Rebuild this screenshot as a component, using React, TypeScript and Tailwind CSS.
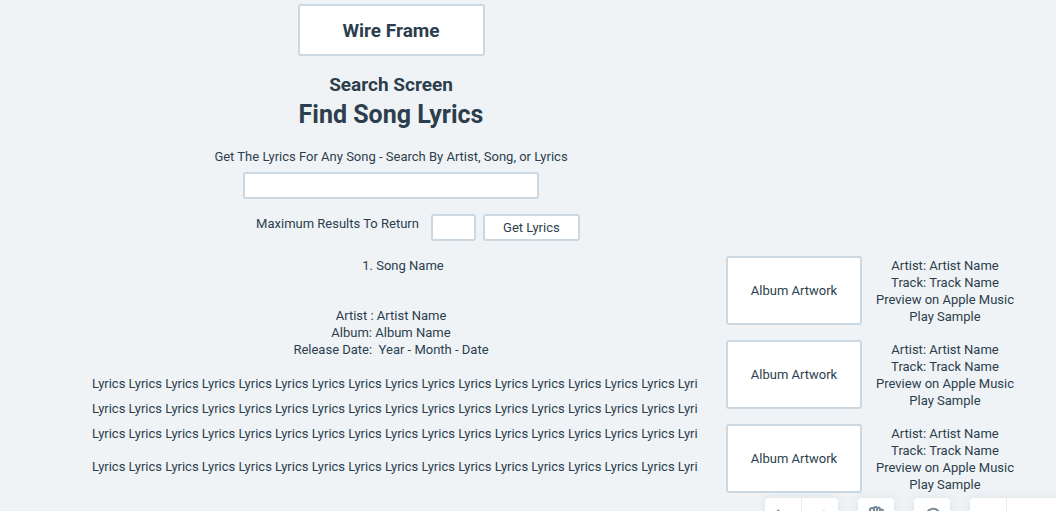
import type { ReactNode } from "react";

const lyricLine = "Lyrics ".repeat(16) + "Lyri";
const results = [1, 2, 3];

function ToolGroup({ children }: { children: ReactNode }) {
  return (
    <div className="flex divide-x divide-[#e8ebee] overflow-hidden rounded-t bg-white shadow-[0_0_8px_rgba(44,62,80,0.1)]">
      {children}
    </div>
  );
}

function Tool({ label, children }: { label: string; children?: ReactNode }) {
  return (
    <button type="button" aria-label={label} className="box-content flex h-7 w-9 items-start justify-center pt-2 text-[#788896]">
      {children}
    </button>
  );
}

function Toolbar() {
  return (
    <div className="absolute top-[498px] left-[765px] flex gap-5">
      <ToolGroup>
        <Tool label="Undo">
          <svg width="20" height="20" viewBox="0 0 20 20" fill="none" stroke="currentColor" strokeWidth="2">
            <path d="M6 4 L2 8 L6 12 M2 8 H12 Q17 8 17 15" />
          </svg>
        </Tool>
        <Tool label="Redo">
          <svg width="20" height="20" viewBox="0 0 20 20" fill="none" stroke="#dde2e6" strokeWidth="2">
            <path d="M13 4 L17 8 L13 12 M17 8 H8 Q3 8 3 15" />
          </svg>
        </Tool>
      </ToolGroup>
      <ToolGroup>
        <Tool label="Pan">
          <svg width="20" height="20" viewBox="0 0 20 20" fill="none" stroke="currentColor" strokeWidth="2" strokeLinecap="round">
            <path d="M4 12 V4 Q4 2 6 2 Q8 2 8 4 V10 M8 4 V2.5 Q8 1 9.7 1 Q11 1 11 3 V10 M11 3 Q11 1.5 12.5 1.5 Q14 1.5 14 4 V10 M14 5 Q14 3.5 15.5 3.5 Q17 3.5 17 5 V13 Q17 18 11 18 Q7 18 3 12" />
          </svg>
        </Tool>
      </ToolGroup>
      <ToolGroup>
        <Tool label="Comments">
          <svg width="20" height="20" viewBox="0 0 20 20" fill="none" stroke="currentColor" strokeWidth="2">
            <path d="M4 17 L5 13 A7 7 0 1 1 8 16 Z" />
          </svg>
        </Tool>
      </ToolGroup>
      <ToolGroup>
        <Tool label="Zoom out" />
        <button type="button" aria-label="Zoom level" className="h-9 w-24" />
      </ToolGroup>
    </div>
  );
}

export default function App() {
  return (
    <div className="relative flex h-screen overflow-hidden bg-[#eff3f6] font-['Roboto',sans-serif] text-[13px] leading-[17px] text-[#2c3e4d]">
      <main className="ml-[92px] flex min-w-0 flex-1 flex-col items-center pt-1 text-center">
        <div className="flex h-[52px] w-[187px] shrink-0 items-center justify-center rounded-[3px] border-2 border-[#cbd7e1] bg-white text-[19px] font-bold">
          Wire Frame
        </div>
        <h2 className="mt-4 text-[19px] leading-[26px] font-bold">Search Screen</h2>
        <h1 className="text-[25px] leading-[34px] font-bold">Find Song Lyrics</h1>
        <form className="flex flex-col items-center" onSubmit={(event) => event.preventDefault()}>
          <label htmlFor="query" className="mt-4">
            Get The Lyrics For Any Song - Search By Artist, Song, or Lyrics
          </label>
          <input id="query" type="text" className="mt-[7px] h-[27px] w-[296px] rounded-[3px] border-2 border-[#cbd7e1] bg-white px-2" />
          <div className="mt-[15px] ml-[54px] flex items-start">
            <label htmlFor="limit" className="mr-3 pt-px">Maximum Results To Return</label>
            <input id="limit" type="text" className="mr-[7px] h-[27px] w-[45px] rounded-[3px] border-2 border-[#cbd7e1] bg-white px-2" />
            <button type="submit" className="h-[27px] w-[97px] rounded-[3px] border-2 border-[#cbd7e1] bg-white">
              Get Lyrics
            </button>
          </div>
        </form>
        <h3 className="mt-4 ml-6">1. Song Name</h3>
        <div className="mt-[33px]">
          <p>Artist : Artist Name</p>
          <p>Album: Album Name</p>
          <p>Release Date:&nbsp; Year - Month - Date</p>
        </div>
        <div className="mt-[17px] flex w-full flex-col gap-2 text-left whitespace-nowrap">
          <p>{lyricLine}</p>
          <p>{lyricLine}</p>
          <p>{lyricLine}</p>
          <p className="mt-2">{lyricLine}</p>
        </div>
      </main>
      <aside className="ml-9 flex w-[330px] shrink-0 flex-col gap-[15px] pt-64 pr-7">
        {results.map((id) => (
          <article key={id} className="flex h-[69px] shrink-0">
            <div className="flex w-[136px] shrink-0 items-center justify-center rounded-[3px] border-2 border-[#cbd7e1] bg-white">
              Album Artwork
            </div>
            <div className="flex-1 pt-px text-center">
              <p>Artist: Artist Name</p>
              <p>Track: Track Name</p>
              <p>Preview on Apple Music</p>
              <p>Play Sample</p>
            </div>
          </article>
        ))}
      </aside>
      <Toolbar />
    </div>
  );
}
